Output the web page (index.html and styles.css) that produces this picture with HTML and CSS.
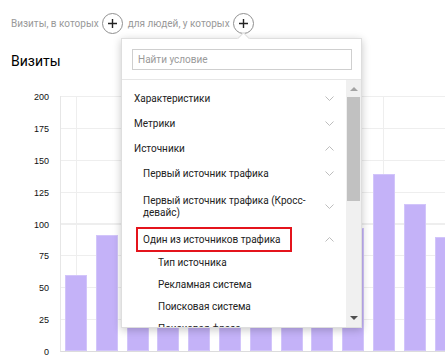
FILE: index.html
```html
<!DOCTYPE html>
<html lang="ru">
<head>
    <meta charset="UTF-8">
    <meta name="viewport" content="width=device-width, initial-scale=1.0">
    <title>Визиты</title>
    <link rel="stylesheet" href="styles.css">
</head>
<body>
    <div class="page">
        <div class="filters">
            <span class="filter-label">Визиты, в которых</span>
            <button class="add-btn first">
                <svg width="11" height="11" viewBox="0 0 11 11"><path d="M5.5 1v9M1 5.5h9" stroke="#222" stroke-width="1.4" fill="none"/></svg>
            </button>
            <span class="filter-label">для людей, у которых</span>
            <button class="add-btn second">
                <svg width="11" height="11" viewBox="0 0 11 11"><path d="M5.5 1v9M1 5.5h9" stroke="#222" stroke-width="1.4" fill="none"/></svg>
            </button>
        </div>

        <h2 class="title">Визиты</h2>

        <div class="chart">
            <div class="y-axis">
                <span>200</span>
                <span>175</span>
                <span>150</span>
                <span>125</span>
                <span>100</span>
                <span>75</span>
                <span>50</span>
                <span>25</span>
                <span>0</span>
            </div>
            <div class="plot">
                <div class="bar" style="height:76px"></div>
                <div class="bar" style="height:116px"></div>
                <div class="bar" style="height:104px"></div>
                <div class="bar" style="height:128px"></div>
                <div class="bar" style="height:96px"></div>
                <div class="bar" style="height:140px"></div>
                <div class="bar" style="height:118px"></div>
                <div class="bar" style="height:110px"></div>
                <div class="bar" style="height:132px"></div>
                <div class="bar" style="height:123px"></div>
                <div class="bar" style="height:177px"></div>
                <div class="bar" style="height:147px"></div>
                <div class="bar" style="height:114px"></div>
            </div>
        </div>
    </div>

    <!-- выпадающий список условий -->
    <div class="dropdown">
        <div class="search">
            <input type="text" placeholder="Найти условие">
        </div>
        <div class="dropdown-body">
            <ul class="tree">
                <li class="item level-1">
                    <span class="label">Характеристики</span>
                    <svg class="chevron" width="9" height="5" viewBox="0 0 9 5"><path d="M0.5 0.5l4 4 4-4" stroke="#bdbdbd" fill="none"/></svg>
                </li>
                <li class="item level-1">
                    <span class="label">Метрики</span>
                    <svg class="chevron" width="9" height="5" viewBox="0 0 9 5"><path d="M0.5 0.5l4 4 4-4" stroke="#bdbdbd" fill="none"/></svg>
                </li>
                <li class="item level-1">
                    <span class="label">Источники</span>
                    <svg class="chevron" width="9" height="5" viewBox="0 0 9 5"><path d="M0.5 4.5l4-4 4 4" stroke="#bdbdbd" fill="none"/></svg>
                </li>
                <li class="item level-2">
                    <span class="label">Первый источник трафика</span>
                    <svg class="chevron" width="9" height="5" viewBox="0 0 9 5"><path d="M0.5 0.5l4 4 4-4" stroke="#bdbdbd" fill="none"/></svg>
                </li>
                <li class="item level-2 two-lines">
                    <span class="label">Первый источник трафика (Кросс-<wbr>девайс)</span>
                    <svg class="chevron" width="9" height="5" viewBox="0 0 9 5"><path d="M0.5 0.5l4 4 4-4" stroke="#bdbdbd" fill="none"/></svg>
                </li>
                <li class="item level-2">
                    <span class="label marked">Один из источников трафика</span>
                    <svg class="chevron" width="9" height="5" viewBox="0 0 9 5"><path d="M0.5 4.5l4-4 4 4" stroke="#bdbdbd" fill="none"/></svg>
                </li>
                <li class="item level-3"><span class="label">Тип источника</span></li>
                <li class="item level-3"><span class="label">Рекламная система</span></li>
                <li class="item level-3"><span class="label">Поисковая система</span></li>
                <li class="item level-3"><span class="label">Поисковая фраза</span></li>
            </ul>
            <div class="scrollbar">
                <span class="arrow up"></span>
                <div class="thumb"></div>
                <span class="arrow down"></span>
            </div>
        </div>
    </div>
</body>
</html>
```

FILE: styles.css
```css
body {
    margin: 0;
    font-family: Roboto, 'Liberation Sans', Arial, sans-serif;
    color: #222;
    background-color: white;
    height: 356px;
    overflow: hidden;
    position: relative;
}

.page {
    padding: 13px 0 0 11px;
}

.filters {
    display: flex;
    align-items: center;
    height: 21px;
}

.filter-label {
    font-size: 10px;
    color: #999;
}

.add-btn {
    width: 21px;
    height: 21px;
    padding: 0;
    border: 1px solid #8f8f8f;
    border-radius: 50%;
    background-color: white;
    display: flex;
    align-items: center;
    justify-content: center;
}

.add-btn.first {
    margin: 0 5px 0 3px;
}

.add-btn.second {
    margin-left: 3px;
}

.title {
    margin: 19px 0 0 0;
    font-size: 14px;
    line-height: 17px;
    font-weight: normal;
    color: #000;
}

.chart {
    display: flex;
    margin-top: 21px;
    margin-left: -1px;
}

.y-axis {
    width: 39px;
    height: 267px;
    display: flex;
    flex-direction: column;
    justify-content: space-between;
    text-align: right;
    font-family: 'Liberation Sans', Arial, sans-serif;
    font-size: 9px;
    line-height: 12px;
    color: #111;
}

.plot {
    flex: 1;
    height: 255px;
    margin: 5px 0 0 11px;
    border-left: 1px solid #e6e6e6;
    border-bottom: 1px solid #dcdcdc;
    display: flex;
    align-items: flex-end;
    gap: 8.8px;
    padding-left: 4px;
    overflow: hidden;
    background:
        linear-gradient(#eeeeee, #eeeeee) 15px 0 / 1px 100% no-repeat,
        linear-gradient(#eeeeee, #eeeeee) 169px 0 / 1px 100% no-repeat,
        linear-gradient(#eeeeee, #eeeeee) 322px 0 / 1px 100% no-repeat,
        repeating-linear-gradient(to bottom, #eeeeee 0, #eeeeee 1px, transparent 1px, transparent 31.875px);
}

.bar {
    flex: none;
    width: 22px;
    background-color: #c4b2f8;
    box-shadow: inset 0 0 0 1px #d2c5fa;
}

.dropdown {
    position: absolute;
    left: 121px;
    top: 38px;
    width: 241px;
    height: 290px;
    box-sizing: border-box;
    background-color: white;
    border: 1px solid #dedede;
    box-shadow: 0 2px 8px rgba(0, 0, 0, 0.22);
    display: flex;
    flex-direction: column;
}

.dropdown::before {
    content: '';
    position: absolute;
    left: 117px;
    top: -5px;
    width: 8px;
    height: 8px;
    background-color: white;
    border-top: 1px solid #dedede;
    border-left: 1px solid #dedede;
    transform: rotate(45deg);
}

.search {
    padding: 10px 9px 9px 10px;
    border-bottom: 1px solid #e6e6e6;
}

.search input {
    display: block;
    width: 100%;
    height: 21px;
    box-sizing: border-box;
    border: 1px solid #cfcfcf;
    padding: 0 5px;
    font-family: inherit;
    font-size: 10px;
    color: #222;
    outline: none;
}

.search input::placeholder {
    color: #9a9a9a;
}

.dropdown-body {
    flex: 1;
    display: flex;
    min-height: 0;
}

.tree {
    flex: 1;
    list-style: none;
    margin: 0;
    padding: 6px 0 0 0;
    overflow: hidden;
}

.item {
    display: flex;
    align-items: center;
    justify-content: space-between;
    height: 25px;
    padding-right: 12px;
    font-size: 10px;
    line-height: 12px;
    color: #222;
}

.level-1 {
    padding-left: 12px;
}

.level-2 {
    padding-left: 21px;
}

.level-3 {
    padding-left: 36px;
    height: 22px;
}

.two-lines {
    height: 41px;
}

.two-lines .label {
    flex: none;
    width: 176px;
}

.marked {
    height: 25px;
    box-sizing: border-box;
    display: flex;
    align-items: center;
    margin-left: -7px;
    padding: 0 9px 0 5px;
    border: 2px solid #e4141c;
}

.chevron {
    flex: none;
}

.scrollbar {
    width: 15px;
    background-color: #f0f0f0;
    display: flex;
    flex-direction: column;
    align-items: center;
    padding-top: 7px;
    box-sizing: border-box;
}

.arrow {
    width: 0;
    height: 0;
    border-left: 4px solid transparent;
    border-right: 4px solid transparent;
}

.arrow.up {
    border-bottom: 4px solid #a3a3a3;
}

.arrow.down {
    margin-top: auto;
    margin-bottom: 7px;
    border-top: 4px solid #505050;
}

.thumb {
    width: 13px;
    height: 104px;
    margin-top: 6px;
    background-color: #c1c1c1;
}
```
